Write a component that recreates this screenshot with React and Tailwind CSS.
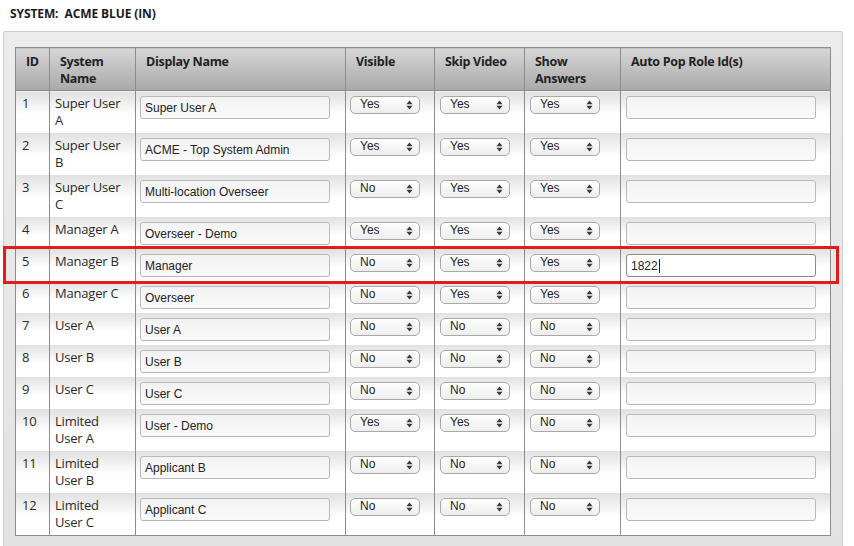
import React from "react";

const rows = [
  { id: 1, sys: ["Super User", "A"], disp: "Super User A", v: "Yes", s: "Yes", a: "Yes", pop: "" },
  { id: 2, sys: ["Super User", "B"], disp: "ACME - Top System Admin", v: "Yes", s: "Yes", a: "Yes", pop: "" },
  { id: 3, sys: ["Super User", "C"], disp: "Multi-location Overseer", v: "No", s: "Yes", a: "Yes", pop: "" },
  { id: 4, sys: ["Manager A"], disp: "Overseer - Demo", v: "Yes", s: "Yes", a: "Yes", pop: "" },
  { id: 5, sys: ["Manager B"], disp: "Manager", v: "No", s: "Yes", a: "Yes", pop: "1822", focus: true },
  { id: 6, sys: ["Manager C"], disp: "Overseer", v: "No", s: "Yes", a: "Yes", pop: "" },
  { id: 7, sys: ["User A"], disp: "User A", v: "No", s: "No", a: "No", pop: "" },
  { id: 8, sys: ["User B"], disp: "User B", v: "No", s: "No", a: "No", pop: "" },
  { id: 9, sys: ["User C"], disp: "User C", v: "No", s: "No", a: "No", pop: "" },
  { id: 10, sys: ["Limited", "User A"], disp: "User - Demo", v: "Yes", s: "Yes", a: "No", pop: "" },
  { id: 11, sys: ["Limited", "User B"], disp: "Applicant B", v: "No", s: "No", a: "No", pop: "" },
  { id: 12, sys: ["Limited", "User C"], disp: "Applicant C", v: "No", s: "No", a: "No", pop: "" },
];

function Arrows() {
  return (
    <svg width="7" height="10" viewBox="0 0 7 10" className="shrink-0">
      <path d="M3.5 0.5 L6.6 4.2 L0.4 4.2 Z" fill="#3a3a3a" />
      <path d="M3.5 9.5 L6.6 5.8 L0.4 5.8 Z" fill="#3a3a3a" />
    </svg>
  );
}

function Select({ value }) {
  return (
    <div className="flex h-[18px] w-[70px] items-center justify-between rounded-[5px] border border-[#a9a9a9] bg-gradient-to-b from-white to-[#ededed] pl-[9px] pr-[6px] text-[12px] leading-none text-[#222] [font-family:'Liberation_Sans',Arial,sans-serif]">
      <span className="-mt-[2px]">{value}</span>
      <Arrows />
    </div>
  );
}

function TextInput({ value, focus }) {
  return (
    <div
      className={
        "flex h-[23px] w-[190px] items-center rounded-[3px] border px-[4px] text-[12px] text-[#222] [font-family:'Liberation_Sans',Arial,sans-serif] " +
        (focus
          ? "border-[#8a8a8a] bg-white"
          : "border-[#b9b9b9] bg-gradient-to-b from-[#f3f3f3] to-[#f9f9f9]")
      }
    >
      <span>{value}</span>
      {focus && <span className="ml-[1px] inline-block h-[14px] w-px bg-[#222]" />}
    </div>
  );
}

const rowBg = "bg-gradient-to-b from-[#e0e0e0] via-white via-[55%] to-white";
const td = "align-top border-x border-[#8c8c8c] " + rowBg;

export default function App() {
  return (
    <div className="relative min-h-[546px] w-[854px] overflow-hidden bg-white [font-family:'Open_Sans',sans-serif]">
      <div className="pl-[10px] pt-[6px] text-[12px] font-bold leading-[16px] tracking-[-0.1px] text-[#1a1a1a]">
        SYSTEM:&nbsp; ACME BLUE (IN)
      </div>
      <div className="ml-[3px] mt-[9px] w-[840px] rounded-tl-[2px] rounded-tr-[2px] border border-[#cdcdcd] bg-gradient-to-b from-[#ececec] to-[#e2e2e2] pb-[30px] pl-[11px] pr-[12px] pt-[15px]">
        <table className="w-[815px] table-fixed border-collapse border border-[#8c8c8c]">
          <colgroup>
            <col className="w-[34px]" />
            <col className="w-[86px]" />
            <col className="w-[210px]" />
            <col className="w-[89px]" />
            <col className="w-[90px]" />
            <col className="w-[96px]" />
            <col className="w-[210px]" />
          </colgroup>
          <thead>
            <tr className="h-[42px]">
              {["ID", "System Name", "Display Name", "Visible", "Skip Video", "Show Answers", "Auto Pop Role Id(s)"].map((h) => (
                <th
                  key={h}
                  className="border border-[#8c8c8c] bg-gradient-to-b from-[#d6d6d6] to-[#a9a9a9] px-[10px] pb-[3px] pt-[5px] text-left align-top text-[12.5px] font-bold leading-[17px] tracking-[-0.3px] text-[#222]"
                >
                  {h}
                </th>
              ))}
            </tr>
          </thead>
          <tbody>
            {rows.map((r) => (
              <tr key={r.id}>
                <td className={td + " px-[6px] pt-[4px] pb-[4px] text-[13px] leading-[17px] tracking-[-0.2px] text-[#2a2a2a]"}>{r.id}</td>
                <td className={td + " px-[5px] pt-[4px] pb-[4px] text-[13px] leading-[17px] tracking-[-0.2px] text-[#2a2a2a]"}>
                  {r.sys.map((s, i) => (
                    <div key={i} className="whitespace-nowrap">{s}</div>
                  ))}
                </td>
                <td className={td + " px-[4px] pt-[5px] pb-[4px]"}>
                  <TextInput value={r.disp} />
                </td>
                <td className={td + " px-[4px] pt-[5px] pb-[4px]"}>
                  <Select value={r.v} />
                </td>
                <td className={td + " px-[5px] pt-[5px] pb-[4px]"}>
                  <Select value={r.s} />
                </td>
                <td className={td + " px-[5px] pt-[5px] pb-[4px]"}>
                  <Select value={r.a} />
                </td>
                <td className={td + " px-[5px] pt-[5px] pb-[4px]"}>
                  <TextInput value={r.pop} focus={r.focus} />
                </td>
              </tr>
            ))}
          </tbody>
        </table>
      </div>
      <div className="pointer-events-none absolute left-[3px] top-[246px] h-[38px] w-[836px] border-[3px] border-[#e31b1b]" />
    </div>
  );
}
